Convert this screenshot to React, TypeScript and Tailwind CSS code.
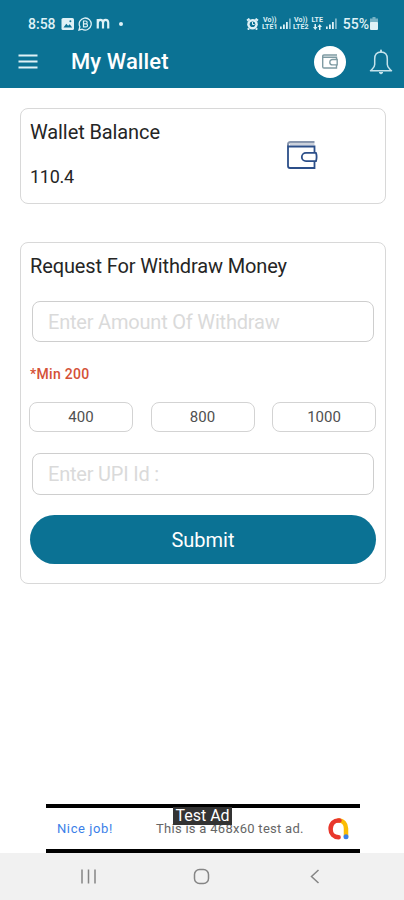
import { useState } from 'react';

const amounts = [400, 800, 1000];

function Signal() {
  return (
    <svg className="h-[11px] w-[11px]" viewBox="0 0 11 11" fill="currentColor" aria-hidden="true">
      <rect x="0" y="8.5" width="1.7" height="2.5" />
      <rect x="3" y="6.5" width="1.8" height="4.5" />
      <rect x="6" y="4" width="1.8" height="7" />
      <rect x="9" y="0.5" width="1.8" height="10.5" opacity="0.55" />
    </svg>
  );
}

function Volte({ top, bottom }: { top: string; bottom: string }) {
  return (
    <span className="flex w-[16px] flex-col items-center text-[7px] leading-[7px] font-bold whitespace-nowrap">
      <span>{top}</span>
      <span>{bottom}</span>
    </span>
  );
}

function StatusBar() {
  return (
    <div className="flex h-[46px] items-center pt-[1px] pl-[28px] pr-[26px] text-[#dff1f6]">
      <span className="w-[33px] text-[14px] leading-[16px] font-medium">8:58</span>
      <svg className="h-[12px] w-[13px]" viewBox="0 0 13 12" aria-hidden="true">
        <rect x="0.5" y="0" width="12.5" height="12" rx="1.6" fill="currentColor" />
        <path d="M2.5 9.5L5.3 5.8l1.8 2 1.6-1.6 2.5 3.3z" fill="#0b7294" />
        <circle cx="9.4" cy="3.3" r="1" fill="#0b7294" />
      </svg>
      <svg className="ml-[4px] h-[14px] w-[14px]" viewBox="0 0 14 14" fill="none" stroke="currentColor" aria-hidden="true">
        <path d="M1 13l.9-3.2A6 6 0 1 1 4.2 12.2z" strokeWidth="1.3" />
        <path d="M5.5 4h2.2a1.4 1.4 0 0 1 0 2.9H5.5zM5.5 6.9H8a1.5 1.5 0 0 1 0 3H5.5z" strokeWidth="1.2" />
      </svg>
      <svg className="ml-[4px] h-[11px] w-[14px]" viewBox="0 0 14 12" fill="none" stroke="currentColor" strokeWidth="2.4" aria-hidden="true">
        <path d="M1.3 11.5V1M1.3 5.5Q1.5 2 4.2 2T7 5V11.5M7 5.5Q7.2 2 9.9 2t2.8 3v6.5" />
      </svg>
      <span className="ml-[9px] h-[4px] w-[4px] rounded-full bg-current" />
      <div className="ml-auto flex items-center">
        <svg className="h-[12px] w-[13px]" viewBox="0 0 12 12" aria-hidden="true">
          <circle cx="6" cy="6.3" r="5.3" fill="currentColor" />
          <path d="M0.6 2.6L3 0.7M11.4 2.6L9 0.7M2.5 10.3L1.4 11.7M9.5 10.3l1.1 1.4" stroke="currentColor" strokeWidth="2" />
          <circle cx="6" cy="6.3" r="2.8" fill="#0b7294" />
          <path d="M6 4v2.5h2" fill="none" stroke="currentColor" />
        </svg>
        <div className="ml-[3px] flex items-center gap-[2px]">
          <Volte top="Vo))" bottom="LTE1" />
          <Signal />
        </div>
        <div className="ml-[2px] flex items-center gap-[1px]">
          <Volte top="Vo))" bottom="LTE2" />
          <span className="flex w-[15px] flex-col items-center text-[7px] leading-[7px] font-bold">
            LTE
            <svg className="h-[6px] w-[9px]" viewBox="0 0 9 6" fill="currentColor" aria-hidden="true">
              <path d="M1.5 0h1.5v3h1.5L2.250 6 0 3h1.500zM6 6h1.500V3H9L6.750 0 4.500 3H6z" />
            </svg>
          </span>
          <Signal />
        </div>
        <span className="ml-[6px] text-[14px] leading-[16px] font-medium">55%</span>
        <svg className="ml-[1px] h-[13px] w-[8px]" viewBox="0 0 8 13" fill="currentColor" aria-hidden="true">
          <path d="M2.5 0h3v1.5H8V6H0V1.5h2.5z" opacity="0.5" />
          <rect y="5" width="8" height="8" rx="1" />
        </svg>
      </div>
    </div>
  );
}

function Header() {
  return (
    <header className="h-[88px] bg-[#0b7294]">
      <StatusBar />
      <div className="flex h-[31px] items-center pl-[18px] pr-[11px] text-white">
        <button type="button" aria-label="Open menu" className="w-[53px]">
          <svg className="h-[15px] w-[20px]" viewBox="0 0 20 15" fill="#dff1f6" aria-hidden="true">
            <path d="M0.5 0.5h19v2h-19zM0.5 6.5h19v2h-19zM0.5 12.5h19v2h-19z" />
          </svg>
        </button>
        <h1 className="pt-[1px] text-[22px] leading-[26px] font-medium tracking-[0.1px]">My Wallet</h1>
        <button type="button" aria-label="Wallet" className="ml-auto flex h-[32px] w-[32px] items-center justify-center rounded-full bg-white">
          <svg className="h-[15px] w-[16px]" viewBox="0 0 16 15" fill="none" stroke="#7f9ba3" strokeWidth="1.4" aria-hidden="true">
            <path d="M15 1H2Q.7 1 .7 2.3V12.7Q.7 14 2 14H14.5V11M.7 3.2H14.5V5.5" />
            <path d="M15.2 5.500H10.500a2.700 2.700 0 0 0 0 5.400H15.200z" />
          </svg>
        </button>
        <button type="button" aria-label="Notifications" className="ml-[23px]">
          <svg className="h-[26px] w-[24px]" viewBox="0 0 24 26" fill="none" stroke="#c5e3ec" strokeWidth="1.5" strokeLinejoin="round" aria-hidden="true">
            <path d="M12 3C7.8 3 5.7 6 5.7 10v5.5C5.7 18.5 3.5 19.5 1.5 21.8H22.5C20.5 19.5 18.3 18.5 18.3 15.5V10C18.3 6 16.2 3 12 3z" />
            <path d="M12 3V1.5" strokeWidth="2" strokeLinecap="round" />
            <path d="M10 23.5h4l-2 1.500z" fill="#c5e3ec" strokeWidth="1" />
          </svg>
        </button>
      </div>
    </header>
  );
}

function BalanceCard() {
  return (
    <section className="flex h-[96px] justify-between rounded-[8px] border border-[#d8d8d8] pt-[11px] pl-[9px] pr-[67px] text-[#252525]">
      <div>
        <h2 className="text-[20px] leading-[24px] tracking-[-0.1px]">Wallet Balance</h2>
        <p className="mt-[22px] text-[18px] leading-[22px] tracking-[-0.3px]">110.4</p>
      </div>
      <svg className="mt-[20px] h-[30px] w-[32px]" viewBox="0 0 32 30" fill="none" aria-hidden="true">
        <path d="M2 6V4.5Q2 2 4.5 2H28.5" stroke="#8795ad" strokeWidth="2" />
        <path d="M4 4.2H28.500" stroke="#ccd2dc" strokeWidth="2.500" />
        <path d="M28.500 13V6.500H2V26q0 2 2 2H28.500V21" stroke="#2c4f89" strokeWidth="1.800" />
        <path d="M30 12.800H20a4.200 4.200 0 0 0 0 8.400H30q1.200-4.200 0-8.400z" stroke="#2c4f89" strokeWidth="1.800" strokeLinejoin="round" />
      </svg>
    </section>
  );
}

function WithdrawForm() {
  const [amount, setAmount] = useState('');
  const [upi, setUpi] = useState('');

  return (
    <section className="mt-[38px] h-[342px] rounded-[8px] border border-[#d8d8d8] px-[9px] pt-[11px]">
      <h2 className="text-[20px] leading-[24px] tracking-[-0.13px] text-[#252525]">Request For Withdraw Money</h2>
      <input
        className="mt-[23px] ml-[2px] block h-[41px] w-[342px] rounded-[8px] border border-[#cecece] px-[15px] text-[20px] tracking-[-0.2px] text-[#252525] placeholder:text-[#dadada]"
        placeholder="Enter Amount Of Withdraw"
        value={amount}
        onChange={(e) => setAmount(e.target.value)}
      />
      <p className="mt-[23px] text-[14px] leading-[18px] font-medium tracking-[0.3px] text-[#d45137]">*Min 200</p>
      <div className="mt-[19px] -ml-px flex justify-between">
        {amounts.map((a) => (
          <button
            key={a}
            type="button"
            className="h-[30px] w-[104px] rounded-[8px] border border-[#d3d3d3] text-[15px] text-[#505050]"
            onClick={() => setAmount(String(a))}
          >
            {a}
          </button>
        ))}
      </div>
      <input
        className="mt-[21px] ml-[2px] block h-[42px] w-[342px] rounded-[8px] border border-[#cecece] px-[15px] text-[20px] tracking-[-0.2px] text-[#252525] placeholder:text-[#dadada]"
        placeholder="Enter UPI Id :"
        value={upi}
        onChange={(e) => setUpi(e.target.value)}
      />
      <button type="button" className="mt-[20px] block h-[49px] w-full rounded-full bg-[#0b7294] text-[20px] text-white">
        Submit
      </button>
    </section>
  );
}

function AdBanner() {
  return (
    <div className="relative ml-[46px] flex h-[49px] w-[314px] items-center border-y-4 border-black bg-white pl-[11px] pr-[11px] text-[13px]">
      <span className="w-[99px] pt-[1px] tracking-[0.6px] text-[#3b7fe8]">Nice job!</span>
      <span className="pt-[1px] tracking-[0.28px] whitespace-nowrap text-[#666]">This is a 468x60 test ad.</span>
      <span className="absolute top-[-1px] left-[127px] h-[18px] w-[59px] bg-[#333] text-center text-[16px] leading-[18px] text-white">
        Test Ad
      </span>
      <svg className="ml-auto h-[22px] w-[21px]" viewBox="0 0 21 22" fill="none" strokeWidth="4.5" strokeLinecap="round" aria-hidden="true">
        <path d="M10.5 2.6C15 2.6 18 6 18 10.5V18" stroke="#fbbc04" />
        <path d="M11.5 2.6C6 2 2.6 6 2.6 11c0 4.8 3.4 8.2 8 8.2" stroke="#e8372c" />
        <circle cx="18" cy="18.8" r="2.5" fill="#3b7fe8" />
      </svg>
    </div>
  );
}

function NavBar() {
  return (
    <nav className="flex h-[47px] items-center bg-[#f1f1f1] pl-[80px] pr-[84px]">
      <svg className="h-[18px] w-full" viewBox="0 0 240 18" fill="none" stroke="#858585" strokeWidth="1.5" aria-hidden="true">
        <path d="M2 1.5v14M8.5 1.5v14M15 1.5v14" />
        <rect x="114.5" y="1.5" width="14" height="14" rx="5" />
        <path d="M238.500 2L231.500 8.500l7 6.500" />
      </svg>
    </nav>
  );
}

export default function App() {
  return (
    <div className="flex h-[900px] w-[404px] flex-col overflow-hidden bg-white font-[Roboto,sans-serif]">
      <Header />
      <main className="flex-1 pt-[20px] pl-[20px] pr-[18px]">
        <BalanceCard />
        <WithdrawForm />
      </main>
      <AdBanner />
      <NavBar />
    </div>
  );
}
